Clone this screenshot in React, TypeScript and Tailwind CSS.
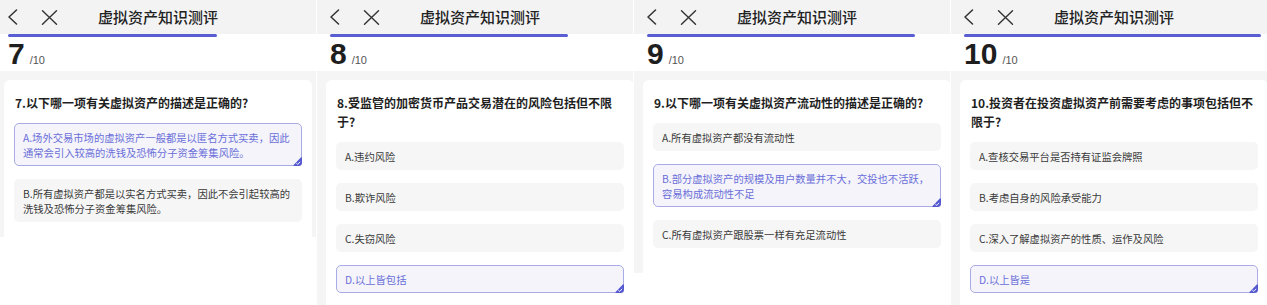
import React from "react";

const cjk = { fontFamily: '"Noto Sans CJK SC", "Noto Sans", sans-serif' };
const num = { fontFamily: '"Liberation Sans", Arial, sans-serif' };

type Panel = {
  n: number;
  shift: string;
  height: string;
  question: string[];
  options: string[];
  selected: number;
};

const panels: Panel[] = [
  {
    n: 7,
    shift: "ml-[-5px]",
    height: "h-[237px]",
    question: ["7.以下哪一项有关虚拟资产的描述是正确的?"],
    options: [
      "A.场外交易市场的虚拟资产一般都是以匿名方式买卖，因此\n通常会引入较高的洗钱及恐怖分子资金筹集风险。",
      "B.所有虚拟资产都是以实名方式买卖，因此不会引起较高的\n洗钱及恐怖分子资金筹集风险。",
    ],
    selected: 0,
  },
  {
    n: 8,
    shift: "ml-0",
    height: "h-[305px]",
    question: ["8.受监管的加密货币产品交易潜在的风险包括但不限", "于?"],
    options: ["A.违约风险", "B.欺诈风险", "C.失窃风险", "D.以上皆包括"],
    selected: 3,
  },
  {
    n: 9,
    shift: "ml-0",
    height: "h-[273px]",
    question: ["9.以下哪一项有关虚拟资产流动性的描述是正确的?"],
    options: [
      "A.所有虚拟资产都没有流动性",
      "B.部分虚拟资产的规模及用户数量并不大，交投也不活跃，\n容易构成流动性不足",
      "C.所有虚拟资产跟股票一样有充足流动性",
    ],
    selected: 1,
  },
  {
    n: 10,
    shift: "ml-0",
    height: "h-[305px]",
    question: ["10.投资者在投资虚拟资产前需要考虑的事项包括但不", "限于?"],
    options: [
      "A.查核交易平台是否持有证监会牌照",
      "B.考虑自身的风险承受能力",
      "C.深入了解虚拟资产的性质、运作及风险",
      "D.以上皆是",
    ],
    selected: 3,
  },
];

const BackIcon = () => (
  <svg width="11" height="16" viewBox="0 0 11 16" fill="none">
    <polyline points="9.5,1 2,8 9.5,15" stroke="#333" strokeWidth="1.5" strokeLinecap="round" strokeLinejoin="round" />
  </svg>
);

const CloseIcon = () => (
  <svg width="17" height="15" viewBox="0 0 17 15" fill="none">
    <path d="M1.5 0.8 L15.5 14.2 M15.5 0.8 L1.5 14.2" stroke="#333" strokeWidth="1.4" strokeLinecap="round" />
  </svg>
);

const CornerCheck = () => (
  <svg className="absolute right-[-1px] bottom-[-1px]" width="10" height="10" viewBox="0 0 10 10">
    <path d="M10 2 L10 6.5 Q10 10 6.5 10 L2 10 Q0.6 10 1.6 9 L8.8 1.6 Q10 0.6 10 2 Z" fill="#5559cf" />
    <path d="M4.6 7.4 L5.8 8.4 L7.9 6.1" stroke="#fff" strokeWidth="0.9" fill="none" strokeLinecap="round" />
  </svg>
);

const Option = ({ text, active }: { text: string; active: boolean }) => (
  <div
    className={
      active
        ? "relative rounded-[5px] border border-[#a9abe6] bg-[#f4f4fa] px-[8px] py-[5.5px] text-[#6a6ed9]"
        : "relative rounded-[5px] border border-transparent bg-[#f6f6f6] px-[8px] py-[5.5px] text-[#3a3a3a]"
    }
  >
    <p className="whitespace-pre-line text-[10.3px] leading-[15px]">{text}</p>
    {active && <CornerCheck />}
  </div>
);

const Phone = ({ p }: { p: Panel }) => {
  const bar = ["w-[209px]", "w-[238px]", "w-[268px]", "w-[297px]"][p.n - 7];
  return (
    <div className={`${p.height} overflow-hidden bg-white`}>
      <div className={`${p.shift} w-[326px]`} style={cjk}>
        <div className="bg-[#f3f3f4]">
          <div className="grid h-[34px] grid-cols-[1fr_auto_1fr] items-center">
            <div className="flex items-center gap-[23px] pl-[12px]">
              <BackIcon />
              <CloseIcon />
            </div>
            <h1 className="text-[15px] font-medium text-[#222]">虚拟资产知识测评</h1>
            <div />
          </div>
        </div>
        <div className="bg-white pl-[13px]">
          <div className={`${bar} h-[3px] rounded-full bg-[#5a5ed3]`} />
        </div>
        <div className="flex h-[34px] items-baseline gap-[5px] bg-white pl-[13px] pt-[2px]" style={num}>
          <span className="text-[30px] font-bold leading-[30px] text-[#1e1e1e]">{p.n}</span>
          <span className="text-[11px] text-[#555]">/10</span>
        </div>
        <div className="bg-[#f5f5f6] px-[9px] pt-[9px]">
          <div className="min-h-[300px] rounded-[6px] bg-white px-[10px] pt-[13px]">
            <h2 className="pl-[1px] text-[12px] font-bold leading-[19px] text-[#1f1f1f]">
              {p.question.map((line, i) => (
                <span key={i} className="block whitespace-nowrap">
                  {line}
                </span>
              ))}
            </h2>
            <div className="mt-[11px] flex flex-col gap-[13px]">
              {p.options.map((o, i) => (
                <Option key={i} text={o} active={i === p.selected} />
              ))}
            </div>
          </div>
        </div>
      </div>
    </div>
  );
};

export default function App() {
  return (
    <div className="grid h-[305px] w-[1267px] grid-cols-4 items-start gap-[1px] bg-white">
      {panels.map((p) => (
        <Phone key={p.n} p={p} />
      ))}
    </div>
  );
}
